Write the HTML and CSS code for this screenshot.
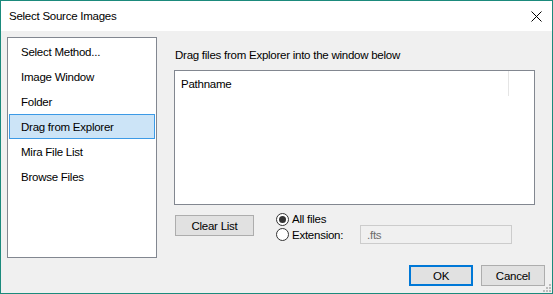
FILE: index.html
```html
<!DOCTYPE html>
<html lang="en">
<head>
  <meta charset="UTF-8" />
  <title>Select Source Images</title>
  <link rel="stylesheet" href="styles.css">
</head>
<body>

  <div class="dialog">
    <div class="titlebar">
      <span class="title">Select Source Images</span>
      <svg class="close" width="11" height="11" viewBox="0 0 11 11">
        <path d="M0.5 0.5 L10.5 10.5 M10.5 0.5 L0.5 10.5" stroke="#000" stroke-width="1" fill="none"/>
      </svg>
    </div>

    <div class="body">
      <div class="content">
        <ul class="methods">
          <li>Select Method...</li>
          <li>Image Window</li>
          <li>Folder</li>
          <li class="selected">Drag from Explorer</li>
          <li>Mira File List</li>
          <li>Browse Files</li>
        </ul>

        <div class="panel">
          <p class="hint">Drag files from Explorer into the window below</p>

          <div class="filelist">
            <div class="filelist-header">
              <span class="col">Pathname</span>
            </div>
          </div>

          <div class="options">
            <button class="btn clear">Clear List</button>
            <div class="radios">
              <label class="radio"><span class="dot checked"></span>All files</label>
              <div class="ext-row">
                <label class="radio ext-label"><span class="dot"></span>Extension:</label>
                <input class="ext" type="text" value=".fts" disabled>
              </div>
            </div>
          </div>
        </div>
      </div>

      <div class="footer">
        <button class="btn default">OK</button>
        <button class="btn">Cancel</button>
        <!-- size grip -->
        <svg class="grip" width="9" height="9" viewBox="0 0 9 9">
          <rect x="6" y="0" width="2" height="2" fill="#bcbcbc"/>
          <rect x="3" y="3" width="2" height="2" fill="#bcbcbc"/>
          <rect x="6" y="3" width="2" height="2" fill="#bcbcbc"/>
          <rect x="0" y="6" width="2" height="2" fill="#bcbcbc"/>
          <rect x="3" y="6" width="2" height="2" fill="#bcbcbc"/>
          <rect x="6" y="6" width="2" height="2" fill="#bcbcbc"/>
        </svg>
      </div>
    </div>
  </div>

</body>
</html>
```

FILE: styles.css
```css
* { box-sizing: border-box; margin: 0; padding: 0; }
body { font-family: "Liberation Sans", Arial, sans-serif; font-size: 11.5px; letter-spacing: -0.25px; color: #000; background: #f0f0f0; }

.dialog {
  width: 553px;
  height: 294px;
  border: 1px solid #1b8a7c;
  display: flex;
  flex-direction: column;
  background: #f0f0f0;
}

.titlebar {
  height: 30px;
  background: #fff;
  display: flex;
  align-items: center;
  justify-content: space-between;
  padding: 0 10px 0 8px;
}
.title { font-size: 11.5px; }

.body {
  flex: 1;
  position: relative;
  display: flex;
  flex-direction: column;
}

.content {
  display: flex;
  gap: 17px;
  padding: 6px 0 0 6px;
}

.methods {
  list-style: none;
  width: 150px;
  height: 221px;
  background: #fff;
  border: 1px solid #828790;
  padding: 1px 1px 0 1px;
}
.methods li {
  height: 25px;
  line-height: 24px;
  padding-left: 11px;
  border: 1px solid transparent;
}
.methods li.selected {
  background: #cce4f7;
  border-color: #3c9ae6;
}

.panel {
  width: 361px;
  display: flex;
  flex-direction: column;
}
.hint {
  line-height: 16px;
  padding: 10px 0 0 1px;
  margin-bottom: 7px;
}

.filelist {
  height: 135px;
  background: #fff;
  border: 1px solid #828790;
}
.filelist-header {
  height: 25px;
  display: flex;
}
.col {
  width: 334px;
  padding-left: 6px;
  line-height: 26px;
  border-right: 1px solid #e5e5e5;
}

.options {
  display: flex;
  align-items: flex-start;
  margin-top: 6px;
}

.btn {
  font-family: inherit;
  font-size: 11.5px;
  letter-spacing: -0.25px;
  color: #000;
  background: #e1e1e1;
  border: 1px solid #adadad;
  height: 21px;
  width: 64px;
}
.btn.clear {
  width: 79px;
  margin: 4px 22px 0 1px;
}
.btn.default {
  border: 2px solid #0078d7;
}

.radios {
  display: flex;
  flex-direction: column;
}
.radio {
  display: flex;
  align-items: center;
  height: 16px;
}
.dot {
  width: 13px;
  height: 13px;
  border: 1px solid #333;
  border-radius: 50%;
  background: #fff;
  margin-right: 3px;
  display: flex;
  align-items: center;
  justify-content: center;
}
.dot.checked::after {
  content: "";
  width: 7px;
  height: 7px;
  border-radius: 50%;
  background: #333;
}

.ext-row {
  display: flex;
  align-items: center;
  height: 19px;
  margin-top: -2px;
}
.ext-label { width: 84px; }
.ext {
  width: 152px;
  height: 19px;
  border: 1px solid #cccccc;
  background: #f0f0f0;
  color: #6d6d6d;
  font-family: inherit;
  font-size: 11.5px;
  letter-spacing: -0.25px;
  padding-left: 6px;
}

.footer {
  display: flex;
  justify-content: flex-end;
  gap: 8px;
  padding: 7px 7px 0 0;
}

.grip {
  position: absolute;
  right: 0;
  bottom: 0;
}
```
